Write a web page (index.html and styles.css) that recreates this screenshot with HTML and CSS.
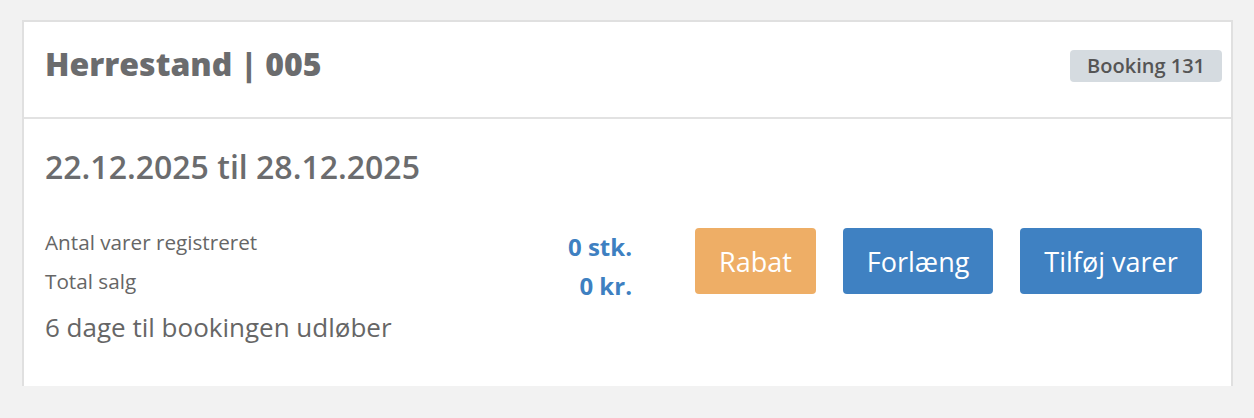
FILE: index.html
```html
<!DOCTYPE html>
<html lang="da">
<head>
<meta charset="utf-8">
<title>Booking</title>
<link rel="stylesheet" href="styles.css">
</head>
<body>
<div class="card">
  <div class="card-header">
    <h1 class="title">Herrestand | 005</h1>
    <span class="badge">Booking 131</span>
  </div>
  <div class="card-body">
    <h2 class="dates">22.12.2025 til 28.12.2025</h2>
    <div class="row">
      <div class="info">
        <div class="stats">
          <div class="labels">
            <div class="label">Antal varer registreret</div>
            <div class="label">Total salg</div>
          </div>
          <div class="values">
            <div class="value">0 stk.</div>
            <div class="value">0 kr.</div>
          </div>
        </div>
        <p class="expiry">6 dage til bookingen udløber</p>
      </div>
      <div class="actions">
        <button class="btn btn-warning">Rabat</button>
        <button class="btn btn-primary">Forlæng</button>
        <button class="btn btn-primary">Tilføj varer</button>
      </div>
    </div>
  </div>
</div>
</body>
</html>
```
FILE: styles.css
```css
* { box-sizing: border-box; }
html, body { height: 100%; }
body {
  margin: 0;
  background: #f2f2f2;
  font-family: "Open Sans", "Liberation Sans", sans-serif;
  color: #666;
  padding: 20px 21px 0 22px;
}
.card {
  background: #fff;
  border: 2px solid #e0e0e0;
  border-bottom: none;
  height: 366px;
}
.card-header {
  display: flex;
  align-items: flex-start;
  justify-content: space-between;
  height: 97px;
  padding: 22px 9px 0 21px;
  border-bottom: 2px solid #e2e2e2;
}
.title {
  margin: 0;
  font-size: 32px;
  font-weight: 800;
  color: #6b6c6e;
  line-height: 40px;
}
.badge {
  margin-top: 6px;
  background: #d5dbe0;
  color: #555;
  font-weight: 600;
  font-size: 20px;
  line-height: 32px;
  height: 32px;
  padding: 0 17px;
  border-radius: 4px;
}
.card-body {
  padding: 28px 29px 0 21px;
}
.dates {
  margin: 0;
  font-size: 32px;
  font-weight: 600;
  color: #6b6c6e;
  line-height: 40px;
}
.row {
  display: flex;
  align-items: flex-start;
  margin-top: 36px;
}
.info { width: 587px; }
.stats {
  display: flex;
  justify-content: space-between;
}
.label {
  font-size: 20.7px;
  line-height: 39px;
}
.values { padding-top: 4px; }
.value {
  font-size: 24px;
  font-weight: 700;
  color: #3e80c1;
  text-align: right;
  line-height: 39px;
}
.expiry {
  margin: 5px 0 0;
  font-size: 26px;
  line-height: 34px;
}
.actions {
  display: flex;
  gap: 27px;
  margin-top: 5px;
  margin-left: 63px;
}
.btn {
  height: 66px;
  border: none;
  border-radius: 4px;
  color: #fff;
  font-family: inherit;
  font-size: 27px;
  padding: 0 24px;
}
.btn-warning { background: #eeae66; }
.btn-primary { background: #3f81c2; }
```
